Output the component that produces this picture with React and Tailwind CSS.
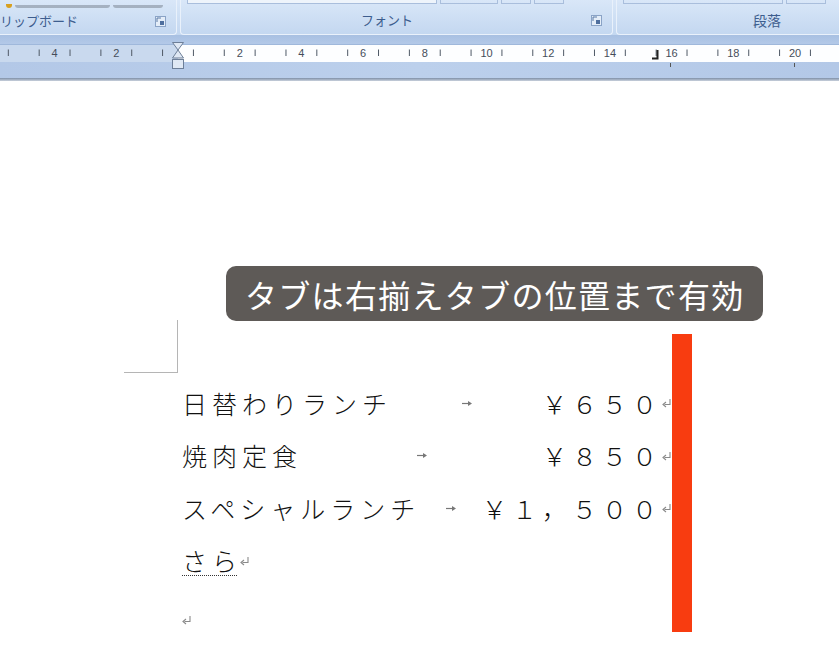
import React from 'react';

const UNIT = 30.85;
const ZERO = 178;

const jp = { fontFamily: '"Noto Sans CJK JP", "Noto Sans", sans-serif' };

const Launcher = () => (
  <svg width="11" height="11" viewBox="0 0 11 11" className="shrink-0">
    <rect x="0.5" y="0.5" width="10" height="10" fill="#e4edf8" stroke="#8aa3c6" />
    <path d="M2 2 H6 M2 2 V6" stroke="#5b7aa6" strokeWidth="1" fill="none" />
    <rect x="5" y="5" width="4" height="4" fill="#4f6f9e" />
  </svg>
);

const Ruler = () => {
  const ticks = [];
  for (let n = -6; n <= 21; n++) {
    ticks.push(ZERO + (n + 0.5) * UNIT);
  }
  const nums = [];
  for (let n = -4; n <= 20; n += 2) {
    if (n !== 0) nums.push(n);
  }
  return (
    <svg width="839" height="18" viewBox="0 0 839 18" className="block">
      <rect x="0" y="0" width={ZERO} height="18" fill="#c9d9ee" />
      <rect x={ZERO} y="0" width={839 - ZERO} height="18" fill="#fdfeff" />
      <line x1="0" y1="0.5" x2="839" y2="0.5" stroke="#9fb8db" />
      {ticks.map((x) => (
        <line key={x} x1={x} y1="5.5" x2={x} y2="12" stroke="#4f5966" strokeWidth="1" />
      ))}
      {nums.map((n) => (
        <text
          key={n}
          x={ZERO + n * UNIT}
          y="13"
          textAnchor="middle"
          fontSize="11"
          fill="#454d5a"
          fontFamily='"Liberation Sans", Arial, sans-serif'
        >
          {Math.abs(n)}
        </text>
      ))}
      <path d="M657.5 6 V15 M652 14.5 H658.5" stroke="#222" strokeWidth="2" fill="none" />
    </svg>
  );
};

const TabArrow = () => (
  <svg width="11" height="7" viewBox="0 0 11 7">
    <path d="M0 3.5 H8" stroke="#777" strokeWidth="1.2" />
    <path d="M6 1 L10 3.5 L6 6 Z" fill="#777" />
  </svg>
);

const Para = () => (
  <svg width="10" height="10" viewBox="0 0 10 10" className="shrink-0">
    <path d="M8 1 V6.5 H2.5" stroke="#8a8a8a" strokeWidth="1.1" fill="none" />
    <path d="M4 4 L1 6.5 L4 9" stroke="#8a8a8a" strokeWidth="1.1" fill="none" />
  </svg>
);

const Row = ({ label, price }) => (
  <div className="flex items-center h-[52.5px] w-[490px]">
    <span className="text-[25px] font-light tracking-[5px] text-[#111]" style={jp}>{label}</span>
    <span className="flex-1 flex justify-center">
      <TabArrow />
    </span>
    <span className="text-[25px] font-light tracking-[5px] text-[#111]" style={jp}>{price}</span>
    <Para />
  </div>
);

export default function App() {
  return (
    <div className="w-[839px] h-[663px] overflow-hidden bg-white relative">
      {/* ribbon */}
      <div className="h-[35px] bg-gradient-to-b from-[#d9e7f8] to-[#c3d7f0] flex gap-[3px] text-[#3d5d8e]" style={jp}>
        <div className="w-[177px] rounded-br-[4px] border-r border-b border-[#e9f1fb] flex flex-col">
          <div className="h-[8px] flex items-end gap-[3px] px-[6px]">
            <span className="w-[6px] h-[4px] bg-[#d8a020] rounded-b-sm" />
            <div className="w-[95px] h-[3px] bg-[#5d6470]/40 rounded-b-sm" />
            <div className="w-[50px] h-[3px] bg-[#5d6470]/40 rounded-b-sm" />
          </div>
          <div className="flex-1 flex items-center justify-between pr-[10px]">
            <span className="text-[13px]">リップボード</span>
            <Launcher />
          </div>
        </div>
        <div className="w-[433px] rounded-b-[4px] border-x border-b border-[#e9f1fb] flex flex-col">
          <div className="h-[6px] flex gap-[3px] px-[6px]">
            <div className="w-[250px] h-[4px] border-b border-x border-[#a9bedc] bg-[#eef4fb]" />
            <div className="w-[58px] h-[4px] border-b border-x border-[#a9bedc]" />
            <div className="w-[30px] h-[4px] border-b border-x border-[#a9bedc]" />
            <div className="w-[30px] h-[4px] border-b border-x border-[#a9bedc]" />
          </div>
          <div className="flex-1 flex items-center pr-[10px]">
            <span className="text-[13px] ml-[180px]">フォント</span>
            <span className="flex-1" />
            <Launcher />
          </div>
        </div>
        <div className="flex-1 rounded-bl-[4px] border-l border-b border-[#e9f1fb] flex flex-col">
          <div className="h-[6px] flex gap-[3px] px-[6px]">
            <div className="w-[160px] h-[4px] border-b border-x border-[#a9bedc]" />
            <div className="w-[40px] h-[4px] border-b border-x border-[#a9bedc]" />
          </div>
          <div className="flex-1 flex items-center">
            <span className="text-[14px] ml-[136px]">段落</span>
          </div>
        </div>
      </div>

      {/* ruler band */}
      <div className="relative h-[46px] bg-[#b5cae8] flex flex-col">
        <div className="h-[9px] bg-gradient-to-b from-[#a8c0e2] to-[#b3c9e8]" />
        <Ruler />
        <div className="relative flex-1 bg-gradient-to-r from-[#b3c8e7] via-[#bcd0ec] to-[#b3c8e7]">
          <div className="absolute left-[670px] top-[1px] w-px h-[4px] bg-[#555]" />
          <div className="absolute left-[794px] top-[1px] w-px h-[4px] bg-[#555]" />
        </div>
        <div className="h-[3px] bg-gradient-to-b from-[#7f90a8] to-[#c9d1dc]" />
        {/* indent marker */}
        <svg width="14" height="30" viewBox="0 0 14 30" className="absolute left-[171px] top-[6px]">
          <path d="M1.5 1.5 H12.5 L7 9 Z" fill="#dfe8f4" stroke="#6d7f98" />
          <path d="M7 9 L12.5 17 H1.5 Z" fill="#dfe8f4" stroke="#6d7f98" />
          <rect x="1.5" y="18.5" width="11" height="9" fill="#dfe8f4" stroke="#6d7f98" />
        </svg>
      </div>

      {/* document */}
      <div className="relative pl-[182px] pt-[296px]">
        <div className="absolute left-[124px] top-[239px] w-[54px] h-[53px] border-r border-b border-[#b5b5b5]" />

        <Row label="日替わりランチ" price="￥６５０" />
        <Row label="焼肉定食" price="￥８５０" />
        <Row label="スペシャルランチ" price="￥１，５００" />
        <div className="flex items-center h-[52.5px]">
          <span className="text-[25px] font-light text-[#111] border-b border-dotted border-[#333] leading-[30px]" style={jp}>
            <span className="tracking-[5px]">さ</span>ら
          </span>
          <span className="ml-[3px]"><Para /></span>
        </div>
        <div className="flex items-center h-[52.5px] pt-[14px]">
          <Para />
        </div>

        <div className="absolute left-[226px] top-[185px] w-[537px] h-[55px] rounded-[10px] bg-[#5e5a57] flex items-center pl-[19px]">
          <span className="text-[32px] tracking-[1.3px] text-white leading-none" style={jp}>
            タブは右揃えタブの位置まで有効
          </span>
        </div>

        <div className="absolute left-[672px] top-[253px] w-[20px] h-[298px] bg-[#f83c10]" />
      </div>
    </div>
  );
}
